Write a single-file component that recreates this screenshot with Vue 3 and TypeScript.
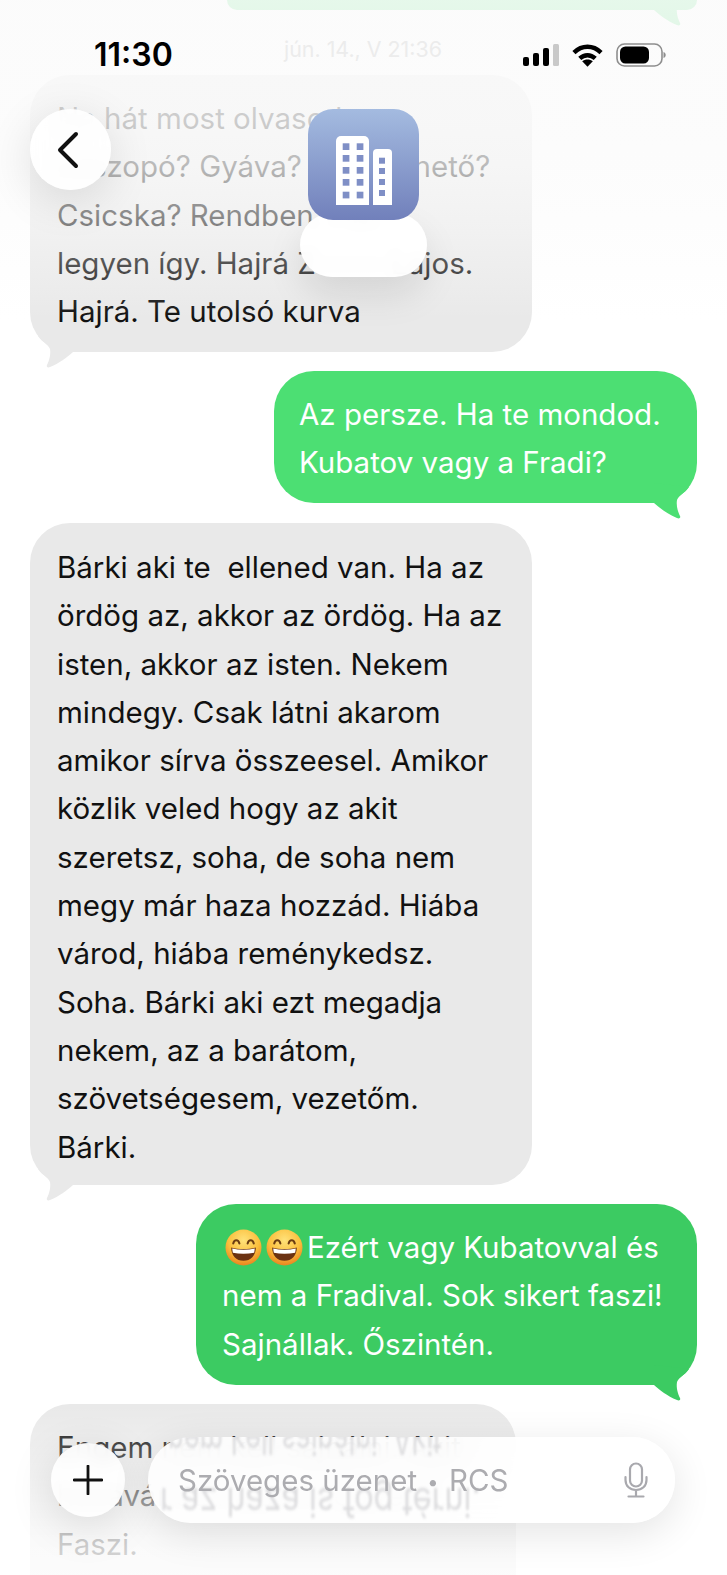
<template>
  <div class="screen">
    <div class="thread">
      <div class="bubble out prev-bubble">
        <svg class="tail" viewBox="-50 -30 50 50"><path :d="tailPath" /></svg>
      </div>

      <div class="bubble in first">
        <p>
          Na hát most olvasod.<br />
          Leszopó? Gyáva?&nbsp; Megvehető?<br />
          Csicska? Rendben. Hát<br />
          legyen így. Hajrá Z········ Lajos.<br />
          Hajrá. Te utolsó kurva
        </p>
        <svg class="tail" viewBox="-50 -30 50 50"><path :d="tailPath" /></svg>
      </div>

      <div class="bubble out light">
        <p>Az persze. Ha te mondod.<br />Kubatov vagy a Fradi?</p>
        <svg class="tail" viewBox="-50 -30 50 50"><path :d="tailPath" /></svg>
      </div>

      <div class="bubble in big">
        <p>
          Bárki aki te&nbsp; ellened van. Ha az<br />
          ördög az, akkor az ördög. Ha az<br />
          isten, akkor az isten. Nekem<br />
          mindegy. Csak látni akarom<br />
          amikor sírva összeesel. Amikor<br />
          közlik veled hogy az akit<br />
          szeretsz, soha, de soha nem<br />
          megy már haza hozzád. Hiába<br />
          várod, hiába reménykedsz.<br />
          Soha. Bárki aki ezt megadja<br />
          nekem, az a barátom,<br />
          szövetségesem, vezetőm.<br />
          Bárki.
        </p>
        <svg class="tail" viewBox="-50 -30 50 50"><path :d="tailPath" /></svg>
      </div>

      <div class="bubble out dark">
        <p>
          <svg v-for="n in 2" :key="n" class="emoji" viewBox="0 0 36 36">
            <defs>
              <radialGradient :id="'face' + n" cx="50%" cy="30%" r="72%">
                <stop offset="0" stop-color="#ffe27a" />
                <stop offset="0.6" stop-color="#fbbf3c" />
                <stop offset="1" stop-color="#e8801e" />
              </radialGradient>
            </defs>
            <circle cx="18" cy="18" r="17.5" :fill="'url(#face' + n + ')'" />
            <path d="M8 14c1-4 5-4 6 0M22 14c1-4 5-4 6 0" fill="none" stroke="#6b3d12" stroke-width="2" stroke-linecap="round" />
            <path d="M6 18c7 2 17 2 24 0 0 8-5 13-12 13S6 26 6 18Z" fill="#6b3212" />
            <path d="M7 19c7 1.600 15 1.600 22 0l-.6 4c-7 1.500-14 1.500-20.800 0Z" fill="#fff" />
          </svg>Ezért vagy Kubatovval és<br />
          nem a Fradival. Sok sikert faszi!<br />
          Sajnállak. Őszintén.
        </p>
        <svg class="tail" viewBox="-50 -30 50 50"><path :d="tailPath" /></svg>
      </div>

      <div class="bubble in last">
        <p>
          Engem nem kell sajnálni. Akit<br />
          hazavár az haza is fog térni.<br />
          Faszi.
        </p>
      </div>
    </div>

    <div class="fade-top"></div>
    <div class="fade-bottom"></div>

    <header class="status">
      <span class="time">11:30</span>
      <span class="stamp">jún. 14., V 21:36</span>
      <span class="status-icons">
        <svg width="36" height="24" viewBox="0 0 36 24">
          <rect x="0" y="14" width="6" height="9" rx="2" fill="#000" />
          <rect x="10" y="10" width="6" height="13" rx="2" fill="#000" />
          <rect x="20" y="5" width="6" height="18" rx="2" fill="#000" />
          <rect x="30" y="1" width="6" height="22" rx="1.500" fill="#c9c9c9" />
        </svg>
        <svg width="31" height="24" viewBox="0 0 32 24" fill="none" stroke="#000" stroke-width="4.600">
          <path d="M2 9.500c8.300-8 19.700-8 28 0" />
          <path d="M8 15.500c4.800-4.400 11.200-4.400 16 0" />
          <path d="M16 24l-5.500-5.500c3-2.400 8-2.400 11 0Z" fill="#000" stroke="none" />
        </svg>
        <svg width="50" height="24" viewBox="0 0 50 24">
          <rect x="1" y="1" width="45" height="22" rx="7.500" fill="none" stroke="#8e8e8e" stroke-width="1.600" />
          <rect x="4" y="3.500" width="29" height="17" rx="5.500" fill="#000" />
          <path d="M47.500 9c1.500.6 2.200 1.700 2.200 3s-.7 2.400-2.200 3Z" fill="#8e8e8e" />
        </svg>
      </span>
    </header>

    <button class="round back" aria-label="Vissza">
      <svg width="26" height="38" viewBox="0 0 26 38" fill="none" stroke="#111" stroke-width="4" stroke-linecap="round" stroke-linejoin="round">
        <path d="M21 3 5 19l16 16" />
      </svg>
    </button>

    <div class="contact">
      <div class="avatar">
        <svg width="111" height="111" viewBox="0 0 111 111">
          <path d="M28 96V32a5 5 0 0 1 5-5h23a5 5 0 0 1 5 5v64Z" fill="#fff" />
          <path d="M65 96V44a4 4 0 0 1 4-4h11a4 4 0 0 1 4 4v52Z" fill="#fff" />
          <g fill="#7f8fc6">
            <rect v-for="w in windowsA" :key="w.k" :x="w.x" :y="w.y" width="6.700" height="6.700" />
            <rect v-for="w in windowsB" :key="w.k" :x="w.x" :y="w.y" width="6" height="6" />
          </g>
        </svg>
      </div>
      <div class="name-pill"></div>
    </div>

    <div class="composer">
      <button class="round plus" aria-label="Hozzáadás">
        <svg width="30" height="30" viewBox="0 0 30 30" stroke="#111" stroke-width="2.800" stroke-linecap="round">
          <path d="M15 1v28M1 15h28" />
        </svg>
      </button>
      <div class="input">
        <span class="ghost ghost-top">nem kell sajnálni. Akit</span>
        <span class="ghost ghost-bottom">r az haza is fog térni.</span>
        <span class="placeholder">Szöveges üzenet <span class="dot">•</span> RCS</span>
        <svg class="mic" width="26" height="36" viewBox="0 0 26 36" fill="none" stroke="#a9a9ae" stroke-width="2.200" stroke-linecap="round">
          <rect x="7" y="1.500" width="12" height="23" rx="6" />
          <path d="M2.500 15v3c0 6 4.500 10 10.500 10s10.500-4 10.500-10v-3M13 28v6M5.500 34.500h15" />
        </svg>
      </div>
    </div>
  </div>
</template>

<script setup lang="ts">
// tail drawn from the bubble's bottom right corner, flipped in css for incoming bubbles
const tailPath = 'M-8-16C-11-11-18-8-20-3c-1 6 1 12 3 16 1 2-1 3-3 2C-30 11-37 5-43 0L-43-20Z'

const windowsA = [] as { k: string; x: number; y: number }[]
const rows = [34.3, 46, 58, 70, 82.7]
rows.forEach((y, r) => {
  windowsA.push({ k: `${r}-a`, x: 34.7, y })
  windowsA.push({ k: `${r}-b`, x: 48.7, y })
})
const windowsB = [48.7, 59, 70, 81].map((y, i) => ({ k: `b${i}`, x: 71, y }))
</script>

<style>
html, body { margin: 0; background: #fff; }
</style>

<style scoped>
.screen {
  position: relative;
  width: 727px;
  height: 1575px;
  overflow: hidden;
  background: #fff;
  font-family: Inter, "Liberation Sans", sans-serif;
}
.thread {
  display: flex;
  flex-direction: column;
  align-items: flex-start;
  padding: 0 30px;
}
.bubble {
  position: relative;
  box-sizing: border-box;
  border-radius: 40px;
}
.bubble p {
  margin: 0;
  font-size: 29.500px;
  line-height: 48.300px;
  white-space: nowrap;
}
.in { background: #e9e9e9; color: #111; fill: #e9e9e9; }
.out { align-self: flex-end; color: #fff; }
.light { background: #4cdf73; fill: #4cdf73; }
.dark { background: #3ccb62; fill: #3ccb62; }

.prev-bubble {
  width: 470px;
  height: 10px;
  background: #4cdf73;
  fill: #4cdf73;
  border-radius: 0 0 24px 24px;
}
.first { width: 502px; height: 277px; margin-top: 65px; padding: 19px 27px; }
.light { width: 423px; height: 132px; margin-top: 19px; padding: 19px 25px; }
.big { width: 502px; height: 662px; margin-top: 20px; padding: 20px 27px; }
.dark { width: 501px; height: 181px; margin-top: 19px; padding: 19px 26px; }
.last { width: 486px; height: 220px; margin-top: 19px; padding: 19px 27px; }

.tail {
  position: absolute;
  right: 0;
  bottom: -20px;
  width: 50px;
  height: 50px;
}
.in .tail {
  right: auto;
  left: 0;
  transform: scaleX(-1);
}

.emoji {
  width: 37px;
  height: 37px;
  margin-right: 4px;
  vertical-align: -8px;
}
.emoji:first-of-type { margin-left: 3px; }

.fade-top {
  position: absolute;
  left: 0;
  right: 0;
  top: 0;
  height: 330px;
  background: linear-gradient(to bottom, rgba(251, 251, 251, .88) 0, rgba(251, 251, 251, .8) 120px, rgba(251, 251, 251, .72) 165px, rgba(251, 251, 251, .48) 225px, rgba(255, 255, 255, 0) 320px);
}
.fade-bottom {
  position: absolute;
  left: 0;
  right: 0;
  bottom: 0;
  height: 170px;
  background: linear-gradient(to bottom, rgba(255, 255, 255, 0) 0, rgba(255, 255, 255, .5) 85px, rgba(255, 255, 255, .78) 135px, rgba(255, 255, 255, .85) 100%);
}

.status {
  position: absolute;
  left: 0;
  right: 0;
  top: 36px;
  height: 36px;
  display: flex;
  align-items: center;
}
.time {
  margin-left: 94px;
  width: 190px;
  font-size: 32px;
  font-weight: 600;
  color: #000;
}
.stamp {
  margin-top: -11px;
  font-size: 21.400px;
  color: #ececec;
}
.status-icons {
  position: absolute;
  right: 61px;
  top: 7px;
  display: flex;
  align-items: center;
  gap: 13px;
}

.round {
  display: flex;
  align-items: center;
  justify-content: center;
  padding: 0;
  border: none;
  border-radius: 50%;
  background: rgba(255, 255, 255, .9);
  backdrop-filter: blur(8px);
  box-shadow: 0 10px 46px rgba(0, 0, 0, .12);
}
.back {
  position: absolute;
  left: 30px;
  top: 109px;
  width: 81px;
  height: 81px;
}
.back svg { margin-right: 6px; }

.contact {
  position: absolute;
  left: 300px;
  top: 109px;
  width: 127px;
  height: 170px;
}
.avatar {
  position: absolute;
  left: 8px;
  top: 0;
  z-index: 1;
  width: 111px;
  height: 111px;
  border-radius: 25px;
  background: linear-gradient(to bottom, #a4bbe0, #7180bb);
}
.avatar svg { display: block; }
.name-pill {
  position: absolute;
  left: 0;
  top: 104px;
  width: 127px;
  height: 64px;
  border-radius: 32px;
  background: rgba(255, 255, 255, .96);
  backdrop-filter: blur(6px);
  box-shadow: 0 18px 36px rgba(0, 0, 0, .1);
}

.composer {
  position: absolute;
  left: 51px;
  top: 1437px;
  width: 624px;
  height: 86px;
  display: flex;
  align-items: center;
  gap: 23px;
}
.plus {
  width: 74px;
  height: 74px;
  flex: none;
}
.input {
  position: relative;
  flex: 1;
  height: 86px;
  display: flex;
  align-items: center;
  justify-content: space-between;
  padding: 0 26px 0 30px;
  overflow: hidden;
  box-sizing: border-box;
  border-radius: 43px;
  background: rgba(255, 255, 255, .9);
  backdrop-filter: blur(14px);
  box-shadow: 0 10px 40px rgba(0, 0, 0, .11);
}
.placeholder {
  position: relative;
  font-size: 29.500px;
  color: #acacb0;
}
.dot {
  font-size: 20px;
  margin: 0 2px;
  vertical-align: 2px;
}
.mic { position: relative; }
.ghost {
  position: absolute;
  font-size: 30px;
  white-space: nowrap;
  color: #dcdcde;
  filter: blur(1.2px);
  transform-origin: left center;
}
.ghost-top { left: 20px; top: -15px; transform: scale(.9, -1.3); }
.ghost-bottom { left: 12px; bottom: 3px; transform: scale(1.08, -1.3); }
</style>
